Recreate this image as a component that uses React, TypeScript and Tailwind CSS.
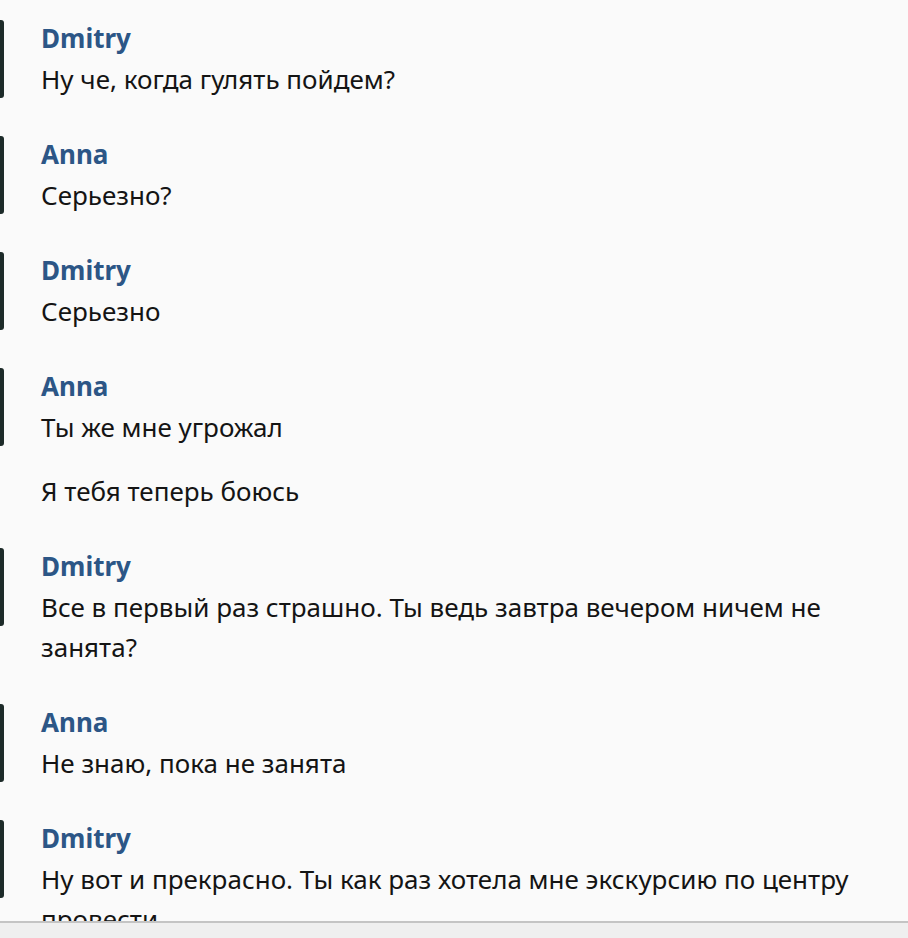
type Group = { name: string; messages: string[] }

const groups: Group[] = [
  { name: "Dmitry", messages: ["Ну че, когда гулять пойдем?"] },
  { name: "Anna", messages: ["Серьезно?"] },
  { name: "Dmitry", messages: ["Серьезно"] },
  { name: "Anna", messages: ["Ты же мне угрожал", "Я тебя теперь боюсь"] },
  { name: "Dmitry", messages: ["Все в первый раз страшно. Ты ведь завтра вечером ничем не занята?"] },
  { name: "Anna", messages: ["Не знаю, пока не занята"] },
  { name: "Dmitry", messages: ["Ну вот и прекрасно. Ты как раз хотела мне экскурсию по центру провести"] },
]

function MessageGroup({ group }: { group: Group }) {
  return (
    <div className="flex">
      <div className="mt-[3px] h-[78px] w-[4px] shrink-0 rounded-r-[3px] bg-[#1d2b29]" />
      <div className="ml-[37px] flex flex-col gap-[24px]">
        <div>
          <div className="h-[42px] text-[26px] font-bold leading-[42px] text-[#2c5686]">{group.name}</div>
          <div className="w-[830px] text-[26px] leading-[40px] text-[#141414]">{group.messages[0]}</div>
        </div>
        {group.messages.slice(1).map((m, i) => (
          <div key={i} className="w-[830px] text-[26px] leading-[40px] text-[#141414]">
            {m}
          </div>
        ))}
      </div>
    </div>
  )
}

export default function App() {
  return (
    <div className="flex h-[938px] w-[908px] flex-col overflow-hidden bg-[#fafafa] font-['Noto_Sans',sans-serif]">
      <div className="flex h-[921px] flex-col gap-[34px] overflow-hidden pt-[17px]">
        {groups.map((g, i) => (
          <MessageGroup key={i} group={g} />
        ))}
      </div>
      <div className="flex-1 border-t-2 border-[#c4c4c4] bg-[#efefef]" />
    </div>
  )
}
